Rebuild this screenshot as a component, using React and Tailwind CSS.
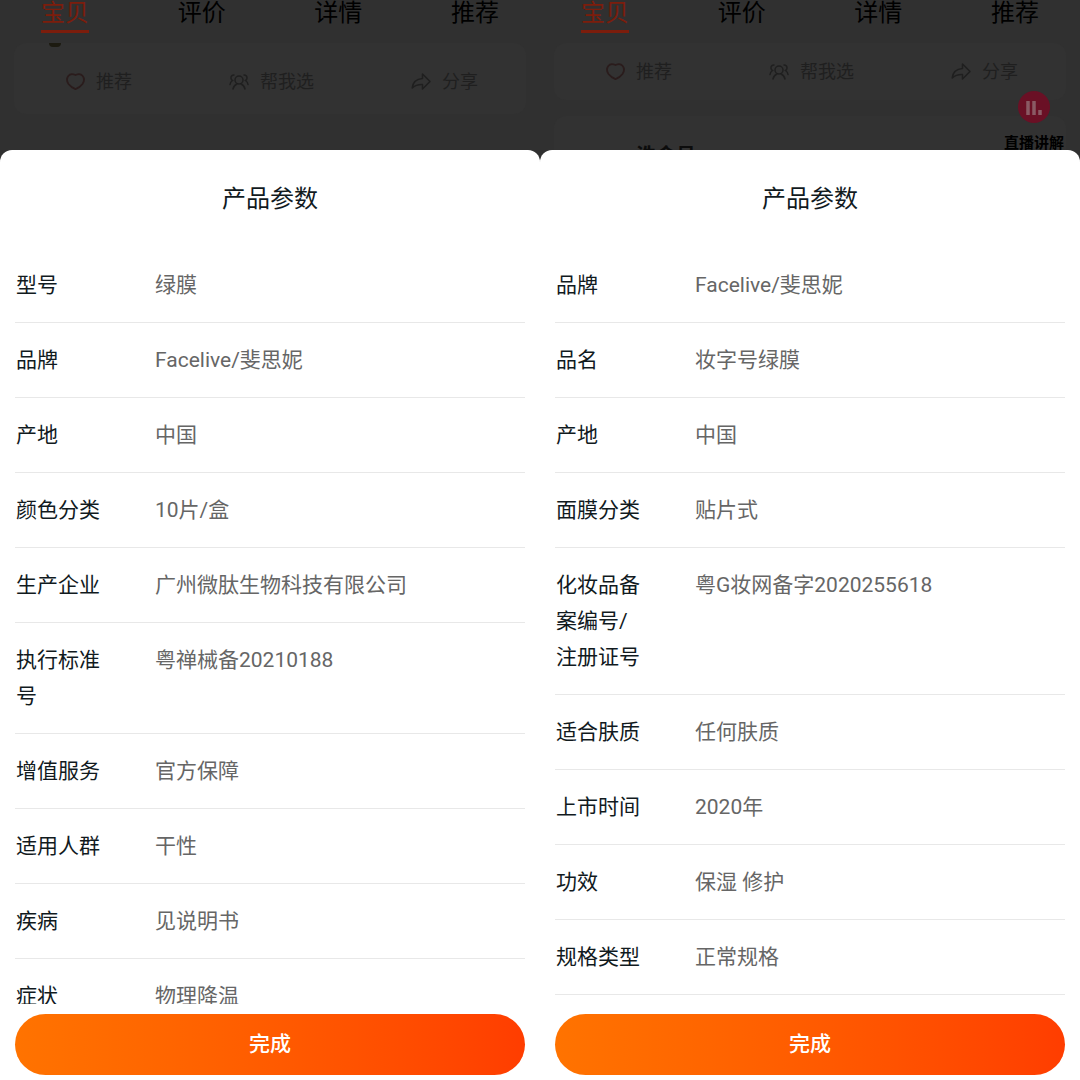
const tabs = ['宝贝', '评价', '详情', '推荐']

const medicalRows = [
  ['型号', '绿膜'],
  ['品牌', 'Facelive/斐思妮'],
  ['产地', '中国'],
  ['颜色分类', '10片/盒'],
  ['生产企业', '广州微肽生物科技有限公司'],
  ['执行标准号', '粤禅械备20210188'],
  ['增值服务', '官方保障'],
  ['适用人群', '干性'],
  ['疾病', '见说明书'],
  ['症状', '物理降温'],
]

const cosmeticRows = [
  ['品牌', 'Facelive/斐思妮'],
  ['品名', '妆字号绿膜'],
  ['产地', '中国'],
  ['面膜分类', '贴片式'],
  ['化妆品备案编号/注册证号', '粤G妆网备字2020255618'],
  ['适合肤质', '任何肤质'],
  ['上市时间', '2020年'],
  ['功效', '保湿 修护'],
  ['规格类型', '正常规格'],
]

function HeartIcon() {
  return (
    <svg className="size-5" viewBox="0 0 20 20" fill="none" stroke="currentColor" strokeWidth="1.8" strokeLinejoin="round">
      <path d="M10.500 3C8 1.800 5 1.800 3.300 4 1.700 6.200 1.800 9.500 3.500 12c1.700 2.300 4.200 4 7 5.200 2.800-1.200 5.300-2.900 7-5.200 1.700-2.500 1.800-5.800.2-8C16 1.800 13 1.800 10.500 3z" />
    </svg>
  )
}

function FriendsIcon() {
  return (
    <svg className="size-5" viewBox="0 0 20 20" fill="none" stroke="currentColor" strokeWidth="1.5" strokeLinecap="round">
      <circle cx="10" cy="8" r="4" />
      <path d="M4 17c.6-2.600 2.200-4.300 4-5M16 17c-.6-2.600-2.200-4.300-4-5" />
      <path d="M5 3C2.800 3 1.800 4.600 2 6.200c.1 1 .7 1.800 1.500 2.300C2 9.500 1.200 10.800 1 12.500M15 3c2.200 0 3.200 1.600 3 3.200-.1 1-.7 1.800-1.500 2.300 1.500 1 2.300 2.300 2.500 4" />
    </svg>
  )
}

function ShareIcon() {
  return (
    <svg className="size-5" viewBox="0 0 20 20" fill="none" stroke="currentColor" strokeWidth="1.5" strokeLinejoin="round">
      <path d="M11.500 2 19 9.500l-7.500 7.500v-4.500C7.500 12.300 4 13.500 1.200 16 1.800 10.500 5.500 7 11.500 6.500z" />
    </svg>
  )
}

function Tabs() {
  return (
    <nav className="flex justify-between px-[41px] pt-px">
      {tabs.map((tab, i) => (
        <button
          key={tab}
          type="button"
          className={
            i === 0
              ? 'border-b-3 border-[#7c1d0c] pb-[5px] text-2xl leading-6 text-[#7c1d0c]'
              : 'border-b-3 border-transparent pb-[5px] text-2xl leading-6 text-black'
          }
        >
          {tab}
        </button>
      ))}
    </nav>
  )
}

function Actions() {
  return (
    <div className="flex justify-between pr-12 pl-[51px] text-lg leading-6 text-[#1f1f1f]">
      <button type="button" className="flex items-center gap-[11px]">
        <span className="text-[#2a1c1c]"><HeartIcon /></span>推荐
      </button>
      <button type="button" className="flex items-center gap-[11px]">
        <FriendsIcon />帮我选
      </button>
      <button type="button" className="flex items-center gap-[11px]">
        <ShareIcon />分享
      </button>
    </div>
  )
}

// Floating entry to the live stream
function LiveBadge() {
  return (
    <button type="button" className="absolute top-[91px] right-4 flex flex-col items-center gap-2 text-[15px] leading-6 font-bold text-black">
      <svg className="size-8" viewBox="0 0 32 32">
        <circle cx="16" cy="16" r="16" fill="#6a1025" />
        <path d="M10 10v14M16 10v14M22 19v5" stroke="#8a5a64" strokeWidth="3.5" />
      </svg>
      直播讲解
    </button>
  )
}

function Sheet({ rows }) {
  return (
    <section className="relative flex min-h-0 flex-1 flex-col rounded-t-xl bg-white px-[15px] pb-[5px]">
      <h2 className="pt-[31px] pb-[31px] text-center text-2xl leading-9 text-[#111a1e]">产品参数</h2>
      <div className="mb-[10px] min-h-0 flex-1 overflow-hidden">
        <table className="w-full table-fixed border-collapse text-left align-top text-[21px] leading-9">
          <tbody>
            {rows.map(([label, value]) => (
              <tr key={label} className="border-b border-[#e8e8e8] align-top">
                <th scope="row" className="w-[140px] py-[19px] pr-[52px] pl-px font-normal text-[#111a1e]">{label}</th>
                <td className="py-[19px] text-[#666]">{value}</td>
              </tr>
            ))}
          </tbody>
        </table>
      </div>
      <button type="button" className="h-[61px] shrink-0 rounded-full bg-linear-to-r from-[#ff7300] to-[#ff3d00] text-[21px] font-medium text-white">
        完成
      </button>
    </section>
  )
}

export default function App() {
  return (
    <main className="grid h-screen grid-cols-2 overflow-hidden bg-[#303030] font-[Roboto,'Noto_Sans_CJK_SC',sans-serif]">
      <div className="flex min-h-0 flex-col">
        <header className="h-[150px] overflow-hidden">
          <Tabs />
          <div className="mx-[14px] mt-[10px] flex flex-col rounded-xl bg-[#323232] pb-5">
            <span className="ml-[35px] h-1 w-3 rounded-b-full bg-[#1c1a10]" />
            <div className="pt-[23px]"><Actions /></div>
          </div>
        </header>
        <Sheet rows={medicalRows} />
      </div>

      <div className="relative flex min-h-0 flex-col">
        <header className="h-[150px] overflow-hidden">
          <Tabs />
          <div className="mx-[14px] mt-[10px] rounded-xl bg-[#323232] pt-[17px] pb-4">
            <Actions />
          </div>
          <div className="mx-[14px] mt-4 rounded-xl bg-[#323232] px-[82px] pt-7 text-xl leading-6 font-bold text-[#0c0c0c]">
            洗金号
          </div>
          <LiveBadge />
        </header>
        <Sheet rows={cosmeticRows} />
      </div>
    </main>
  )
}
